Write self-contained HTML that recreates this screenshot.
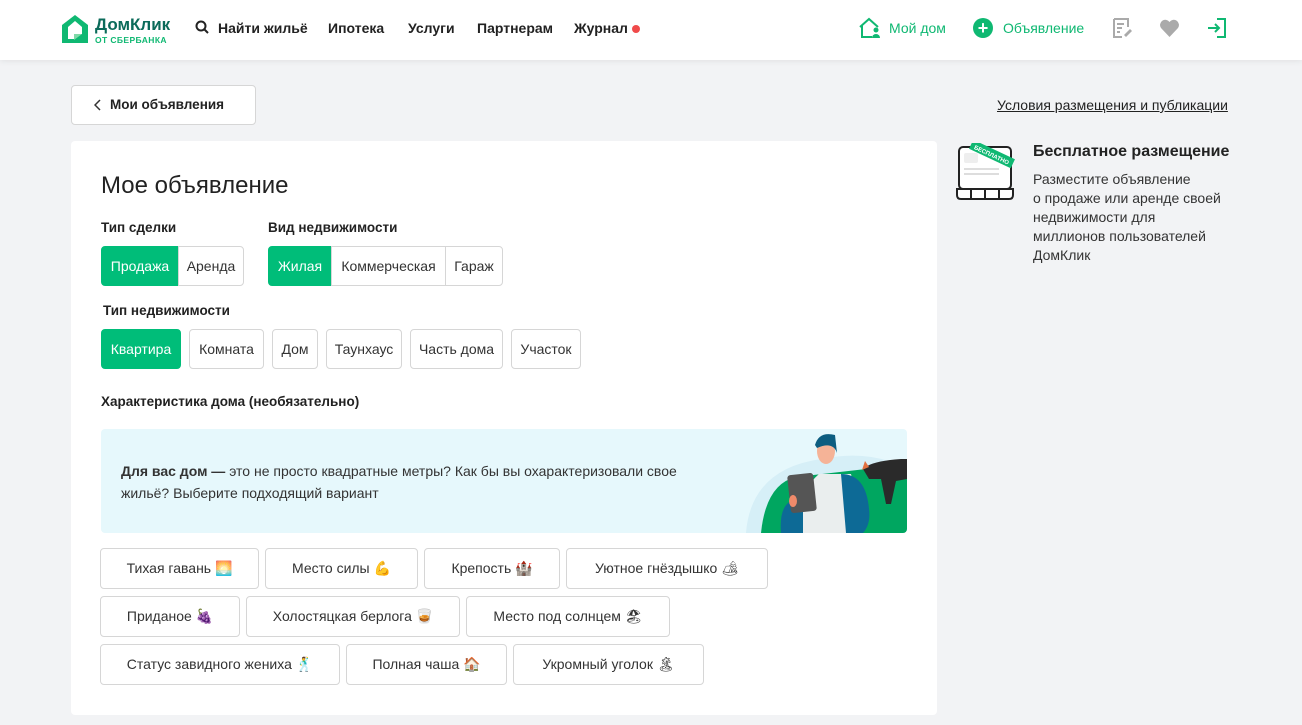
<!DOCTYPE html><html><head><meta charset="utf-8"><style>
*{box-sizing:border-box;margin:0;padding:0}
body{width:1302px;height:725px;background:#f2f3f5;font-family:"Liberation Sans","DejaVu Sans",sans-serif;color:#222;position:relative;overflow:hidden;font-size:14px}
.a{position:absolute}
.hdr{left:0;top:0;width:1302px;height:60px;background:#fff;box-shadow:0 1px 6px rgba(0,0,0,.08)}
.nav{top:20px;font-size:14px;font-weight:bold;color:#222}
.g{color:#0fb872}
.chip{position:absolute;display:flex;align-items:center;justify-content:center;border:1px solid #d6d6d6;background:#fff;color:#333;font-size:14px;border-radius:4px;white-space:nowrap}
.on{background:#00bd79;border-color:#00bd79;color:#fff}
.lbl{font-weight:bold;font-size:13.5px;color:#222}
</style></head><body>
<div class="a hdr"></div>
<svg class="a" style="left:60px;top:13px" width="30" height="31" viewBox="0 0 30 31"><path d="M2 12 L15 2 L28 12 V30 H2Z" fill="#0fb872"/><path d="M8 14 L15 8 L22 14 V21 H14 V26 H8Z" fill="#fff"/><path d="M14 21 H22 L14 27Z" fill="#7fd9a8"/></svg>
<div class="a" style="left:95px;top:15px;font-weight:bold;font-size:17px;color:#0b6b5a">ДомКлик</div>
<div class="a" style="left:95px;top:35px;font-weight:bold;font-size:8.5px;color:#0fb872;letter-spacing:.4px">ОТ СБЕРБАНКА</div>
<svg class="a" style="left:195px;top:20px" width="14" height="14" viewBox="0 0 14 14"><circle cx="6" cy="6" r="4.5" fill="none" stroke="#222" stroke-width="2"/><path d="M9.5 9.5L13 13" stroke="#222" stroke-width="2"/></svg>
<div class="a nav" style="left:218px">Найти жильё</div>
<div class="a nav" style="left:328px">Ипотека</div>
<div class="a nav" style="left:408px">Услуги</div>
<div class="a nav" style="left:477px">Партнерам</div>
<div class="a nav" style="left:574px">Журнал</div>
<div class="a" style="left:632px;top:25px;width:8px;height:8px;border-radius:50%;background:#f04a4a"></div>
<svg class="a" style="left:858px;top:17px" width="24" height="22" viewBox="0 0 24 22"><path d="M2 10 L11 2 L20 10 M4 8 V20 H14" fill="none" stroke="#0fb872" stroke-width="2"/><circle cx="18" cy="13" r="2.5" fill="#0fb872"/><path d="M14 21 a4 4 0 0 1 8 0Z" fill="#0fb872"/></svg>
<div class="a g" style="left:889px;top:20px;font-size:14px">Мой дом</div>
<div class="a" style="left:973px;top:18px;width:20px;height:20px;border-radius:50%;background:#0fb872;color:#fff;font-weight:bold;font-size:18px;line-height:20px;text-align:center">+</div>
<div class="a g" style="left:1003px;top:20px;font-size:14px">Объявление</div>
<svg class="a" style="left:1112px;top:17px" width="22" height="22" viewBox="0 0 22 22"><path d="M2 2H16V10 M2 2V20H10" fill="none" stroke="#aaa" stroke-width="2"/><path d="M5 7H12M5 11H10M5 15H8" stroke="#aaa" stroke-width="2"/><path d="M12 18 L18 12 L20 14 L14 20Z" fill="#aaa"/></svg>
<svg class="a" style="left:1159px;top:19px" width="21" height="18" viewBox="0 0 21 18"><path d="M10.5 18 L2 9 A5 5 0 0 1 10.5 3 A5 5 0 0 1 19 9Z" fill="#aaa"/></svg>
<svg class="a" style="left:1207px;top:17px" width="20" height="22" viewBox="0 0 20 22"><path d="M10 2H18V20H10" fill="none" stroke="#0fb872" stroke-width="2"/><path d="M1 11H12M8 7L12 11L8 15" fill="none" stroke="#0fb872" stroke-width="2"/></svg>

<div class="a" style="left:71px;top:85px;width:185px;height:40px;background:#fff;border:1px solid #d6d6d6;border-radius:4px"></div>
<svg class="a" style="left:94px;top:99px" width="8" height="12" viewBox="0 0 8 12"><path d="M6 1L1 6L6 11" fill="none" stroke="#333" stroke-width="1.5"/></svg>
<div class="a" style="left:110px;top:97px;font-weight:bold;font-size:13.5px">Мои объявления</div>
<div class="a" style="left:997px;top:97px;font-size:14px;text-decoration:underline;color:#222">Условия размещения и публикации</div>

<div class="a" style="left:71px;top:141px;width:866px;height:574px;background:#fff;border-radius:4px"></div>
<div class="a" style="left:101px;top:172px;font-size:24px;color:#222">Мое объявление</div>
<div class="a lbl" style="left:101px;top:220px">Тип сделки</div>
<div class="a lbl" style="left:268px;top:220px">Вид недвижимости</div>
<div class="chip on" style="left:101px;top:246px;width:78px;height:40px;border-radius:4px 0 0 4px">Продажа</div>
<div class="chip" style="left:178px;top:246px;width:66px;height:40px;border-radius:0 4px 4px 0">Аренда</div>
<div class="chip on" style="left:268px;top:246px;width:64px;height:40px;border-radius:4px 0 0 4px">Жилая</div>
<div class="chip" style="left:331px;top:246px;width:115px;height:40px;border-radius:0">Коммерческая</div>
<div class="chip" style="left:445px;top:246px;width:58px;height:40px;border-radius:0 4px 4px 0">Гараж</div>
<div class="a lbl" style="left:103px;top:303px">Тип недвижимости</div>
<div class="chip on" style="left:101px;top:329px;width:80px;height:40px">Квартира</div>
<div class="chip" style="left:189px;top:329px;width:75px;height:40px">Комната</div>
<div class="chip" style="left:272px;top:329px;width:46px;height:40px">Дом</div>
<div class="chip" style="left:326px;top:329px;width:76px;height:40px">Таунхаус</div>
<div class="chip" style="left:410px;top:329px;width:93px;height:40px">Часть дома</div>
<div class="chip" style="left:511px;top:329px;width:70px;height:40px">Участок</div>
<div class="a lbl" style="left:101px;top:394px">Характеристика дома (необязательно)</div>

<div class="a" style="left:101px;top:429px;width:806px;height:104px;background:#e6f8fc;border-radius:4px;overflow:hidden">
<svg class="a" style="left:640px;top:0" width="166" height="104" viewBox="0 0 166 104"><path d="M5 104 Q10 40 80 30 Q130 20 166 40 V104Z" fill="#d6eff7"/><path d="M20 104 Q25 55 55 48 L125 40 Q150 38 166 40 V104Z" fill="#00a660"/><path d="M55 104 Q55 65 78 45 L110 45 Q118 80 115 104Z" fill="#eaeeee"/><path d="M100 45 Q125 45 128 80 Q130 95 122 104 H105 Z" fill="#0d6a96"/><path d="M40 104 Q38 78 50 72 L62 80 L62 104Z" fill="#0d6a96"/><ellipse cx="85" cy="22" rx="9" ry="13" fill="#f5b397"/><path d="M74 16 Q78 2 94 6 L96 24 Q92 12 76 19Z" fill="#0d5d80"/><rect x="48" y="45" width="26" height="38" rx="3" fill="#555" transform="rotate(-6 61 64)"/><ellipse cx="52" cy="72" rx="4" ry="6" fill="#f08a6a"/><path d="M122 40 Q130 32 160 30 L166 30 V50 L155 52 L150 75 L145 75 L140 50 L128 50Z" fill="#2a2a2a"/><path d="M121 41 L124 32 L128 38Z" fill="#e07040"/></svg>
</div>
<div class="a" style="left:121px;top:460px;font-size:14px;line-height:22px;color:#333;width:580px"><b>Для вас дом —</b> это не просто квадратные метры? Как бы вы охарактеризовали свое жильё? Выберите подходящий вариант</div>

<div class="chip" style="left:100px;top:548px;width:159px;height:41px">Тихая гавань 🌅</div>
<div class="chip" style="left:265px;top:548px;width:153px;height:41px">Место силы 💪</div>
<div class="chip" style="left:424px;top:548px;width:136px;height:41px">Крепость 🏰</div>
<div class="chip" style="left:566px;top:548px;width:202px;height:41px">Уютное гнёздышко 🏕</div>
<div class="chip" style="left:100px;top:596px;width:140px;height:41px">Приданое 🍇</div>
<div class="chip" style="left:246px;top:596px;width:214px;height:41px">Холостяцкая берлога 🥃</div>
<div class="chip" style="left:466px;top:596px;width:204px;height:41px">Место под солнцем 🏖</div>
<div class="chip" style="left:100px;top:644px;width:240px;height:41px">Статус завидного жениха 🕺</div>
<div class="chip" style="left:346px;top:644px;width:161px;height:41px">Полная чаша 🏠</div>
<div class="chip" style="left:513px;top:644px;width:191px;height:41px">Укромный уголок 🏝</div>

<svg class="a" style="left:955px;top:143px" width="62" height="60" viewBox="0 0 62 60"><rect x="4" y="4" width="52" height="42" rx="4" fill="#fff" stroke="#222" stroke-width="2"/><rect x="9" y="10" width="14" height="10" rx="2" fill="#eee"/><path d="M9 26H44M9 31H44" stroke="#ddd" stroke-width="2"/><path d="M2 46H58V52 Q58 56 54 56 H6 Q2 56 2 52Z M16 46V56 M30 46V56 M44 46V56" fill="#fff" stroke="#222" stroke-width="2"/><rect x="14" y="6" width="46" height="10" fill="#0fb872" transform="rotate(25 37 11)"/><text x="37" y="14" font-size="6" fill="#fff" font-family="Liberation Sans" font-weight="bold" text-anchor="middle" transform="rotate(25 37 11)">БЕСПЛАТНО</text></svg>
<div class="a" style="left:1033px;top:143px;font-weight:bold;font-size:16px">Бесплатное размещение</div>
<div class="a" style="left:1033px;top:170px;font-size:14px;line-height:19px;color:#333;width:200px">Разместите объявление<br>о продаже или аренде своей<br>недвижимости для<br>миллионов пользователей<br>ДомКлик</div>
</body></html>
